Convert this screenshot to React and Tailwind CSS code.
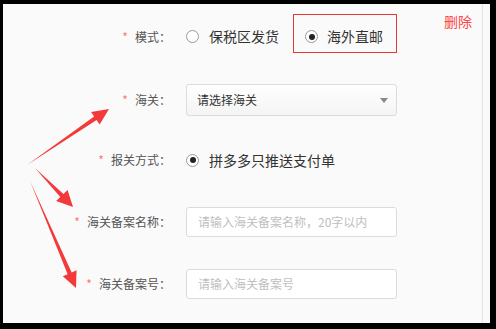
const font = { fontFamily: '"Noto Sans CJK SC", "Noto Sans", sans-serif' };

function arrowPoints(tx, ty, px, py, headLen = 16, headHalf = 7.5, shaftHalf = 2.2) {
  const dx = px - tx;
  const dy = py - ty;
  const len = Math.hypot(dx, dy);
  const ux = dx / len;
  const uy = dy / len;
  const nx = -uy;
  const ny = ux;
  const bx = px - ux * headLen;
  const by = py - uy * headLen;
  const pts = [
    [tx, ty],
    [bx + nx * shaftHalf, by + ny * shaftHalf],
    [bx + nx * headHalf, by + ny * headHalf],
    [px, py],
    [bx - nx * headHalf, by - ny * headHalf],
    [bx - nx * shaftHalf, by - ny * shaftHalf],
  ];
  return pts.map((p) => p.join(",")).join(" ");
}

function Radio({ checked = false }) {
  return (
    <span className="flex h-[13px] w-[13px] shrink-0 items-center justify-center rounded-full border border-[#999] bg-white">
      {checked ? <span className="h-[6px] w-[6px] rounded-full bg-[#222]" /> : null}
    </span>
  );
}

function Label({ children }) {
  return (
    <div className="flex w-[168px] shrink-0 items-center justify-end text-[12px] text-[#555]">
      <span className="mr-[7px] text-[12px] leading-none text-[#f77]">*</span>
      <span>{children}：</span>
    </div>
  );
}

function TextInput({ placeholder }) {
  return (
    <div className="flex h-[30px] w-[211px] items-center rounded-[3px] border border-[#dcdcdc] bg-white pl-[11px] text-[12px] text-[#c0c0c0]">
      {placeholder}
    </div>
  );
}

export default function App() {
  return (
    <div className="relative h-[329px] w-[496px] overflow-hidden bg-black" style={font}>
      <div className="ml-[3px] mt-[4px] h-[319px] w-[487px] bg-[#fafafa]">
        <div className="flex h-full w-[480px] flex-col border-r border-[#e4e4e4] pt-[10px]">
          {/* 模式 */}
          <div className="flex h-[39px] items-center">
            <div className="pt-[7px]">
              <Label>模式</Label>
            </div>
            <div className="ml-[15px] flex items-center pt-[6px]">
              <Radio />
              <span className="ml-[10px] text-[14px] text-[#333]">保税区发货</span>
            </div>
            <div className="ml-[14px] flex h-[39px] w-[104px] items-center border border-[#e53935] pl-[11px] pt-[6px]">
              <Radio checked />
              <span className="ml-[9px] text-[14px] text-[#333]">海外直邮</span>
            </div>
            <span className="ml-auto mr-[10px] -mt-[3px] self-start text-[14px] leading-[20px] text-[#ff4444]">
              删除
            </span>
          </div>

          {/* 海关 */}
          <div className="mt-[31px] flex h-[32px] items-center">
            <Label>海关</Label>
            <div className="ml-[15px] flex h-[32px] w-[211px] items-center justify-between rounded-[3px] border border-[#dcdcdc] bg-gradient-to-b from-white to-[#f4f4f4] pl-[10px] pr-[8px] text-[12px] text-[#333]">
              <span>请选择海关</span>
              <span className="h-0 w-0 border-x-[4.5px] border-t-[5px] border-x-transparent border-t-[#888]" />
            </div>
          </div>

          {/* 报关方式 */}
          <div className="mt-[28px] flex h-[32px] items-center">
            <Label>报关方式</Label>
            <div className="ml-[15px] flex items-center">
              <Radio checked />
              <span className="ml-[10px] text-[14px] text-[#333]">拼多多只推送支付单</span>
            </div>
          </div>

          {/* 海关备案名称 */}
          <div className="mt-[30px] flex h-[32px] items-center">
            <Label>海关备案名称</Label>
            <div className="ml-[15px]">
              <TextInput placeholder="请输入海关备案名称，20字以内" />
            </div>
          </div>

          {/* 海关备案号 */}
          <div className="mt-[30px] flex h-[32px] items-center">
            <Label>海关备案号</Label>
            <div className="ml-[15px]">
              <TextInput placeholder="请输入海关备案号" />
            </div>
          </div>
        </div>
      </div>

      <svg className="pointer-events-none absolute left-0 top-0" width="496" height="329">
        <polygon points={arrowPoints(27, 165, 109, 109, 16.5, 7.5, 2.2)} fill="#f23a3a" />
        <polygon points={arrowPoints(35, 168, 73, 207, 16, 8, 2.2)} fill="#f23a3a" />
        <polygon points={arrowPoints(30, 181, 76, 288, 16, 7.5, 2.2)} fill="#f23a3a" />
      </svg>
    </div>
  );
}
